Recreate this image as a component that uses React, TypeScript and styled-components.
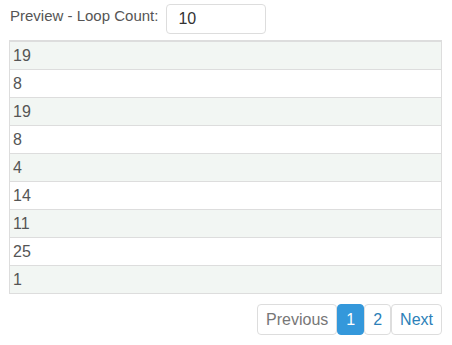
import React from 'react';
import styled, { createGlobalStyle } from 'styled-components';

const Global = createGlobalStyle`
  body {
    margin: 0;
    background: #fff;
    font-family: "Liberation Sans", Arial, sans-serif;
    color: #555;
  }
`;

const Page = styled.div`
  padding: 4px 10px 0 9px;
  width: 452px;
  box-sizing: border-box;
`;

const Toolbar = styled.div`
  display: flex;
  align-items: flex-start;
  gap: 8px;
  height: 30px;
`;

const Label = styled.label`
  font-size: 15px;
  color: #555;
  padding: 3px 0 0 1px;
`;

const CountInput = styled.input`
  width: 100px;
  height: 30px;
  box-sizing: border-box;
  border: 1px solid #ddd;
  border-radius: 4px;
  padding: 0 11px;
  font-family: inherit;
  font-size: 16px;
  color: #333;
  outline: none;
`;

const Table = styled.div`
  margin-top: 6px;
  border: 1px solid #ddd;
  border-top-width: 2px;
`;

const Row = styled.div<{ $odd: boolean }>`
  height: 27px;
  display: flex;
  align-items: center;
  padding: 0 3px;
  font-size: 16px;
  color: #555;
  background: ${(p) => (p.$odd ? '#f2f6f3' : '#fff')};
  & + & {
    border-top: 1px solid #ddd;
  }
`;

const Pager = styled.div`
  display: flex;
  justify-content: flex-end;
  margin-top: 10px;
`;

const PageButton = styled.button<{ $active?: boolean }>`
  height: 31px;
  box-sizing: border-box;
  padding: 0 8px;
  border: 1px solid ${(p) => (p.$active ? '#3498db' : '#ddd')};
  border-radius: 4px;
  background: ${(p) => (p.$active ? '#3498db' : '#fff')};
  color: ${(p) => (p.$active ? '#fff' : '#2c7fb8')};
  font-family: inherit;
  font-size: 16px;
  cursor: pointer;
  &:disabled {
    color: #777;
  }
`;

const values = [19, 8, 19, 8, 4, 14, 11, 25, 1];

export default function App() {
  return (
    <Page>
      <Global />
      <Toolbar>
        <Label>Preview - Loop Count:</Label>
        <CountInput defaultValue="10" />
      </Toolbar>
      <Table>
        {values.map((v, i) => (
          <Row key={i} $odd={i % 2 === 0}>{v}</Row>
        ))}
      </Table>
      <Pager>
        <PageButton disabled>Previous</PageButton>
        <PageButton $active>1</PageButton>
        <PageButton>2</PageButton>
        <PageButton>Next</PageButton>
      </Pager>
    </Page>
  );
}
